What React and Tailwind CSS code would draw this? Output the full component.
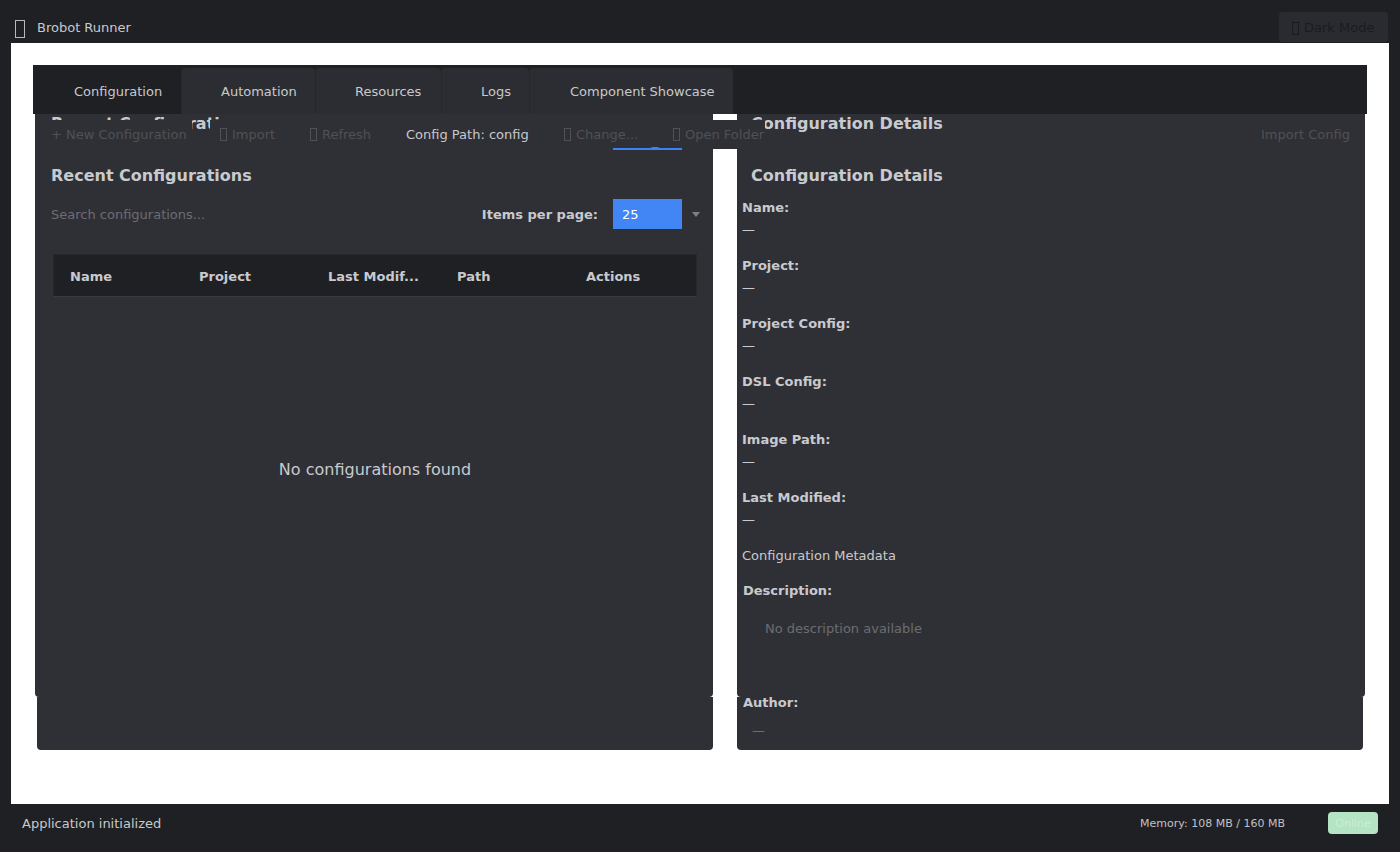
import React from 'react';

const Tofu = ({ className = '' }) => (
  <span className={`inline-block w-[7px] h-[13px] border border-current shrink-0 ${className}`} />
);

const tabs = [
  { name: 'Configuration', w: 'w-[148px] pl-[41px]', active: true },
  { name: 'Automation', w: 'w-[134px] pl-[40px]' },
  { name: 'Resources', w: 'w-[126px] pl-[40px]' },
  { name: 'Logs', w: 'w-[88px] pl-[40px]' },
  { name: 'Component Showcase', w: 'w-[204px] pl-[41px]' },
];

const columns = ['Name', 'Project', 'Last Modif...', 'Path', 'Actions'];
const fields = ['Name:', 'Project:', 'Project Config:', 'DSL Config:', 'Image Path:', 'Last Modified:'];

const App = () => {
  return (
    <div className="h-screen w-full flex flex-col bg-[#1f2024] font-['DejaVu_Sans',sans-serif] text-[13px] text-[#c8c9cc] overflow-hidden">
      {/* Title bar */}
      <header className="h-[43px] shrink-0 flex items-start justify-between pt-[12px] pl-[15px] pr-[12px]">
        <div className="flex items-center h-[30px]">
          <span className="inline-block w-[10px] h-[18px] border border-[#b8b9bd] mt-[3px]" />
          <span className="ml-[12px] pt-[2px] text-[#c8c9cc]">Brobot Runner</span>
        </div>
        <button className="h-[30px] w-[109px] rounded-[4px] bg-[#2a2b30] flex items-center pl-[13px] pt-[2px] gap-[5px] text-[#1a1b1f]">
          <Tofu />
          <span>Dark Mode</span>
        </button>
      </header>

      {/* Main white area */}
      <main className="flex-1 bg-white mx-[11px] px-[22px] pt-[22px] flex flex-col">
        {/* Tabs */}
        <div className="h-[49px] shrink-0 bg-[#1f2024] flex items-end">
          {tabs.map((tab) => (
            <div
              key={tab.name}
              className={`h-[46px] flex items-center pt-[2px] whitespace-nowrap rounded-t-[4px] text-[#c8c9cc] ${tab.w} ${
                tab.active ? 'bg-[#1f2024]' : 'bg-[#2c2d32] shadow-[inset_1px_0_0_#26272b]'
              }`}
            >
              {tab.name}
            </div>
          ))}
        </div>

        {/* Content */}
        <div className="relative flex-1">
          <div className="flex gap-[24px] px-[2px]">
            {/* Left card */}
            <div className="w-[678px] flex flex-col">
              <div className="h-[583px] rounded-b-[4px] bg-[#2f3035]">
                <h2 className="pl-[16px] text-[16px] leading-[19px] font-bold text-[#c8cacf]">Recent Configurations</h2>
                <h2 className="mt-[33px] pl-[16px] text-[16px] leading-[19px] font-bold text-[#c8cacf]">Recent Configurations</h2>
                <div className="mt-[14px] h-[30px] flex items-center pl-[16px] pr-[13px]">
                  <span className="flex-1 pt-[2px] text-[#6b6d73]">Search configurations...</span>
                  <span className="pt-[2px] font-bold text-[#c8cacf] mr-[15px]">Items per page:</span>
                  <div className="w-[69px] h-[30px] bg-[#4285f4] text-white flex items-center pt-[2px] pl-[9px]">25</div>
                  <div className="w-[18px] flex justify-end">
                    <span className="w-0 h-0 border-x-[4px] border-x-transparent border-t-[5px] border-t-[#7f8085]" />
                  </div>
                </div>
                <div className="mt-[25px] ml-[18px] mr-[16px]">
                  <div className="h-[43px] bg-[#1f2024] border border-[#27282c] border-b-[#3a3b40] flex items-center pt-[2px] pl-[16px] overflow-hidden">
                    {columns.map((col) => (
                      <span key={col} className="w-[129px] shrink-0 font-bold text-[#c8cacf] whitespace-nowrap">{col}</span>
                    ))}
                  </div>
                  <div className="h-[344px] flex items-center justify-center pt-[2px] text-[16px] text-[#c8cacf]">
                    No configurations found
                  </div>
                </div>
              </div>
              <div className="h-[53px] ml-[2px] rounded-b-[4px] bg-[#2f3035]" />
            </div>

            {/* Right card */}
            <div className="flex-1 flex flex-col">
              <div className="relative h-[583px] rounded-b-[4px] bg-[#2f3035]">
                <h2 className="pl-[14px] text-[16px] leading-[19px] font-bold text-[#c8cacf]">Configuration Details</h2>
                <div className="absolute left-[5px] top-[34px] flex gap-[3px]">
                  <span className="w-[3px] h-[1px] bg-[#8a8b90]" />
                  <span className="w-[3px] h-[1px] bg-[#8a8b90]" />
                </div>
                <h2 className="mt-[33px] pl-[14px] text-[16px] leading-[19px] font-bold text-[#c8cacf]">Configuration Details</h2>
                <div className="pl-[5px] mt-[15px]">
                  <div className="flex flex-col gap-[20px]">
                    {fields.map((f) => (
                      <div key={f}>
                        <div className="leading-[16px] font-bold text-[#c8cacf]">{f}</div>
                        <div className="mt-[6px] leading-[16px] text-[#c8cacf]">—</div>
                      </div>
                    ))}
                  </div>
                  <div className="mt-[20px] leading-[16px] text-[#c8cacf]">Configuration Metadata</div>
                  <div className="mt-[19px] ml-[1px] leading-[16px] font-bold text-[#c8cacf]">Description:</div>
                  <div className="mt-[22px] ml-[23px] leading-[16px] text-[#6b6d73]">No description available</div>
                  <div className="mt-[58px] ml-[1px] leading-[16px] font-bold text-[#c8cacf]">Author:</div>
                  <div className="mt-[12px] ml-[10px] leading-[16px] text-[#6b6d73]">—</div>
                </div>
              </div>
              <div className="h-[53px] mr-[2px] rounded-b-[4px] bg-[#2f3035]" />
            </div>
          </div>

          {/* Toolbar laid over the cards */}
          <div className="absolute top-[6px] left-[2px] right-[2px] h-[29px] flex text-[#505156] whitespace-nowrap">
            <div className="w-[157px] bg-[#2f3035] flex items-center pl-[16px]">+ New Configuration</div>
            <div className="w-[18px]" />
            <div className="w-[86px] bg-[#2f3035] flex items-center gap-[5px] pl-[10px]"><Tofu />Import</div>
            <div className="w-[96px] bg-[#2f3035] flex items-center gap-[5px] pl-[14px]"><Tofu />Refresh</div>
            <div className="w-[158px] bg-[#2f3035] flex items-center pl-[14px] text-[#c8c9cc]">Config Path: config</div>
            <div className="w-[109px] bg-[#2f3035] flex items-center gap-[5px] pl-[14px]"><Tofu />Change...</div>
            <div className="w-[106px] bg-[#2f3035] flex items-center gap-[5px] pl-[14px]"><Tofu />Open Folder</div>
            <div className="ml-auto flex items-center pr-[15px]">Import Config</div>
          </div>

          {/* Focus underline of the page-size combo */}
          <div className="absolute left-[580px] top-[34px] w-[69px] h-[2px] bg-[#3b82f6]">
            <span className="absolute left-[37px] -top-[1px] w-[10px] h-[3px] rounded-t-full bg-[#3b82f6]" />
          </div>
        </div>
      </main>

      {/* Status bar */}
      <footer className="h-[48px] shrink-0 flex items-start pt-[8px] px-[22px]">
        <div className="h-[22px] flex items-center pt-[2px] flex-1">Application initialized</div>
        <div className="h-[22px] flex items-center pt-[2px] text-[11px] text-[#c0c1c5]">Memory: 108 MB / 160 MB</div>
        <div className="ml-[43px] h-[22px] w-[50px] rounded-[4px] bg-[#b4e4c4] flex items-center justify-center pt-[2px] text-[11px] text-[#cbeed5]">
          Online
        </div>
      </footer>
    </div>
  );
};

export default App;
